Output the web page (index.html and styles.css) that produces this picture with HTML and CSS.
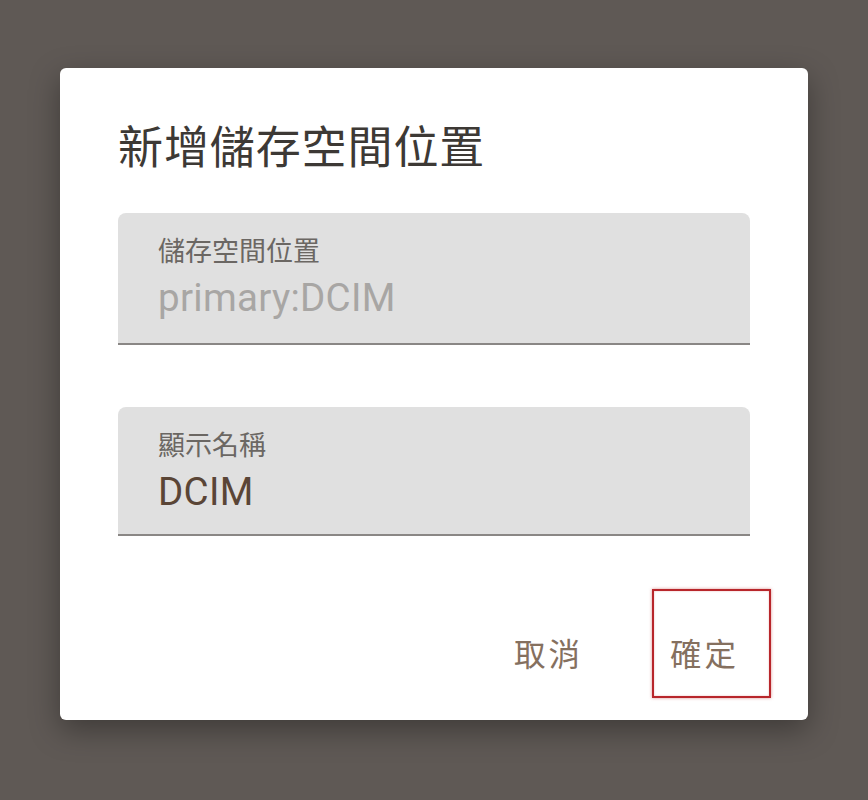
FILE: index.html
```html
<!DOCTYPE html>
<html lang="zh-Hant">
<head>
<meta charset="utf-8">
<title>新增儲存空間位置</title>
<link rel="stylesheet" href="styles.css">
</head>
<body>
<div class="dialog">
  <h1 class="title">新增儲存空間位置</h1>
  <div class="field field-first">
    <div class="label">儲存空間位置</div>
    <div class="value hint">primary:DCIM</div>
  </div>
  <div class="field field-second">
    <div class="label">顯示名稱</div>
    <div class="value">DCIM</div>
  </div>
  <div class="actions">
    <button class="btn">取消</button>
    <button class="btn btn-marked">確定</button>
  </div>
</div>
</body>
</html>
```

FILE: styles.css
```css
html, body {
  margin: 0;
  padding: 0;
}
body {
  background: #5f5955;
  width: 868px;
  height: 800px;
  overflow: hidden;
  padding-top: 68px;
  box-sizing: border-box;
}
.dialog {
  margin-left: 60px;
  width: 748px;
  height: 652px;
  box-sizing: border-box;
  background: #ffffff;
  border-radius: 6px;
  box-shadow: 0 10px 30px rgba(0, 0, 0, 0.35);
  padding: 54px 58px 0 58px;
  display: flex;
  flex-direction: column;
}
.title {
  margin: 0;
  font-family: "Noto Sans CJK TC", sans-serif;
  font-weight: 400;
  font-size: 45px;
  line-height: 45px;
  color: #3d3935;
  letter-spacing: 0.9px;
}
.field {
  background: #e0e0e0;
  border-radius: 8px 8px 0 0;
  border-bottom: 2px solid #8a8785;
  box-sizing: border-box;
  padding: 21px 40px 0 40px;
  display: flex;
  flex-direction: column;
}
.field-first {
  margin-top: 46px;
  height: 132px;
}
.field-second {
  margin-top: 62px;
  height: 129px;
}
.label {
  font-family: "Noto Sans CJK TC", sans-serif;
  font-size: 27px;
  line-height: 32px;
  color: #6b6763;
}
.value {
  margin-top: 9px;
  font-family: Roboto, sans-serif;
  font-size: 38.5px;
  line-height: 45px;
  color: #5a4536;
  letter-spacing: 0.3px;
}
.value.hint {
  color: #a8a6a4;
}
.actions {
  margin-top: 86px;
  margin-right: -7px;
  display: flex;
  justify-content: flex-end;
  gap: 51px;
}
.btn {
  position: relative;
  height: 60px;
  padding: 0 18px;
  border: 0;
  background: transparent;
  font-family: "Noto Sans CJK TC", sans-serif;
  font-size: 31.5px;
  line-height: 60px;
  letter-spacing: 3px;
  color: #85705f;
}
.btn-marked::after {
  content: "";
  position: absolute;
  top: -33px;
  left: 0;
  right: -14px;
  bottom: -16px;
  border: 2px solid #b8262b;
  box-shadow: 0 0 3px rgba(190, 40, 40, 0.5), inset 0 0 2px rgba(190, 40, 40, 0.35);
}
```
